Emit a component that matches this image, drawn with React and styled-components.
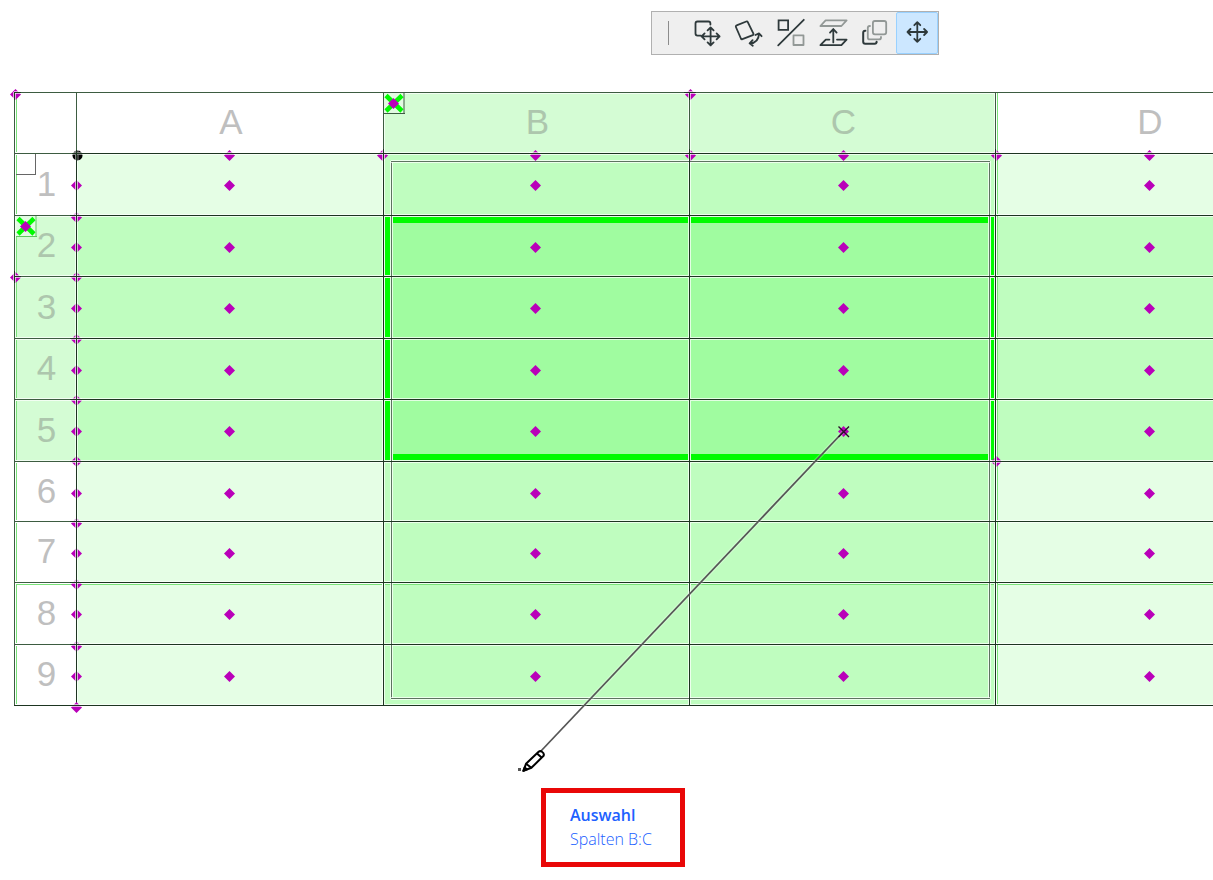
import React from "react";
import styled, { createGlobalStyle } from "styled-components";

const GlobalStyle = createGlobalStyle`
  *, *::before, *::after { box-sizing: border-box; }
  body {
    margin: 0;
    background: #fff;
    font-family: "Liberation Sans", Arial, sans-serif;
    overflow-x: hidden;
  }
`;

const color = {
  line: "#1d3521",
  headLine: "#3d5c41",
  frame: "#5d7360",
  halo: "rgba(255, 255, 255, 0.7)",
  green: "#00fb00",
  softGreen: "#7ae37a",
  handle: "#b900b9",
  ink: "#2e393b",
  muted: "#929896",
};

const Page = styled.main`
  position: relative;
  display: flex;
  flex-direction: column;
  align-items: flex-start;
  min-height: 100vh;
  overflow-x: clip;
`;

const Header = styled.header`
  padding: 11px 0 0 651px;
`;

const Toolbar = styled.div`
  display: flex;
  align-items: center;
  height: 44px;
  border: 1px solid #b0b0b0;
  background: #efefef;
`;

const Separator = styled.span`
  width: 1px;
  height: 24px;
  margin: 0 17px 0 16px;
  background: #8c8c8c;
`;

const ToolButton = styled.button`
  display: block;
  width: 42px;
  height: 42px;
  padding: 0;
  border: 1px solid ${(p) => (p.$active ? "#99d1ff" : "transparent")};
  border-radius: 2px;
  background: ${(p) => (p.$active ? "#cce7ff" : "transparent")};

  svg {
    display: block;
    margin: -1px;
    fill: none;
    stroke: ${color.ink};
    stroke-width: 1.8;
    stroke-linecap: round;
    stroke-linejoin: round;
  }
`;

const Sheet = styled.section`
  padding: 37px 0 0 14px;
`;

const Grid = styled.table`
  width: 1288px;
  table-layout: fixed;
  border-collapse: separate;
  border-spacing: 0;
  border-bottom: 1px solid ${color.line};
`;

const Row = styled.tr`
  height: ${(p) => p.$height}px;
`;

const HeadCell = styled.th`
  padding: 0 0 2px 2px;
  border-top: 1px solid ${color.headLine};
  border-left: 1px solid ${color.headLine};
  background: ${(p) => (p.$selected ? "#d4fcd4" : "#fff")};
  box-shadow: inset 0 0 0 1px ${color.halo};
  color: ${(p) => (p.$selected ? "#adc6ad" : "#bfbfbf")};
  font-size: 35px;
  font-weight: 400;
  line-height: 40px;
  text-align: center;
`;

const tones = { light: "#e5fee5", medium: "#bffdbf", strong: "#a0fca0" };

const Cell = styled.td`
  padding: 0;
  border-top: 1px solid ${color.line};
  border-left: 1px solid ${color.line};
  background: ${(p) => tones[p.$tone]};
  box-shadow: inset 0 0 0 1px ${color.halo};
`;

const Overlay = styled.svg`
  position: absolute;
  inset: 0;
  width: 100%;
  height: 100%;
  pointer-events: none;
`;

const Callout = styled.aside`
  width: 144px;
  margin: 82px 0 13px 541px;
  padding: 10px 0 11px 24px;
  border: 5px solid #e90707;
  color: #2060ff;
  font-family: "Open Sans", "Noto Sans", sans-serif;
  font-size: 16px;
  line-height: 24px;
  white-space: nowrap;
`;

const CalloutTitle = styled.h2`
  margin: 0;
  font-size: 16px;
  font-weight: 600;
`;

const CalloutText = styled.p`
  margin: 0;
  font-weight: 300;
`;

const move = (x, y, r) =>
  `M${x - r} ${y}H${x + r}M${x} ${y - r}V${y + r}` +
  `M${x - r + 3} ${y - 3}L${x - r} ${y}l3 3M${x + r - 3} ${y - 3}l3 3l-3 3` +
  `M${x - 3} ${y - r + 3}l3 -3l3 3M${x - 3} ${y + r - 3}l3 3l3 -3`;

const tools = [
  {
    label: "Verschieben",
    icon: (
      <>
        <path d="M15 23.6H11.5a2 2 0 0 1-2-2V11.5a2 2 0 0 1 2-2H22.4a2 2 0 0 1 2 2V12.5" />
        <path d={move(24.6, 24.4, 9)} />
      </>
    ),
  },
  {
    label: "Drehen",
    icon: (
      <>
        <path d="M8.6 13.4L18.3 9.5a1.2 1.2 0 0 1 1.5 .6L25.4 21.6a1.2 1.2 0 0 1-.6 1.6L14.4 27.1a1.2 1.2 0 0 1-1.5-.6L7.9 15a1.2 1.2 0 0 1 .7-1.6z" />
        <path d="M21.8 31.4C27.8 31 30.8 27 31 21.6M27.4 23L31 21.4L33.6 24.2M24.6 28.2L21.6 31.4L24.8 33.8" />
      </>
    ),
  },
  {
    label: "Spiegeln",
    icon: (
      <>
        <path strokeLinejoin="miter" d="M8.6 8.4h9.5v9.5h-9.5z" />
        <path d="M8.2 33.4L33.8 7.8" />
        <path stroke={color.muted} d="M23.5 23.4h10v9.6h-10z" />
      </>
    ),
  },
  {
    label: "Anheben",
    icon: (
      <>
        <path stroke={color.muted} d="M8.4 14L13.6 8.4H34.6L29.4 14z" />
        <path d="M17.4 27.6H13.8L8.4 33.2H29.4L34.6 27.6H25" />
        <path d="M21.3 30.4V17.2M18 20.6L21.3 17L24.6 20.6" />
      </>
    ),
  },
  {
    label: "Vervielfachen",
    icon: (
      <>
        <rect x="18.9" y="9" width="13.3" height="13.3" rx="2" stroke={color.muted} />
        <path stroke={color.muted} d="M16 14h-.2a2 2 0 0 0-2 2V25.4a2 2 0 0 0 2 2H25a2 2 0 0 0 2-2V25" />
        <path strokeWidth="2" d="M11.4 18.8h-.2a2 2 0 0 0-2 2V29.8a2 2 0 0 0 2 2H20.6a2 2 0 0 0 2-2V30.6" />
      </>
    ),
  },
  { label: "Bewegen", active: true, icon: <path d={move(21.3, 20, 9.8)} /> },
];

const columns = [
  { name: "A", width: 307 },
  { name: "B", width: 306, selected: true },
  { name: "C", width: 306, selected: true },
  { name: "D", width: 307 },
];

const rows = [
  { name: 1, height: 62 },
  { name: 2, height: 61, selected: true },
  { name: 3, height: 62, selected: true },
  { name: 4, height: 61, selected: true },
  { name: 5, height: 62, selected: true },
  { name: 6, height: 60 },
  { name: 7, height: 61 },
  { name: 8, height: 62 },
  { name: 9, height: 61 },
];

const toneOf = (row, col) =>
  row.selected && col.selected ? "strong" : row.selected || col.selected ? "medium" : "light";

const rowLines = [153, 215, 276, 338, 399, 461, 521, 582, 644, 705];
const cellX = [229, 535, 843, 1149];
const cellY = [185, 247, 308, 370, 431, 493, 553, 614, 676];

/*
 * Diamond grip; v and h give the offset of a grid line that runs across it.
 * left and top are where those lines begin, for grips on the sheet's edge.
 */
function Handle({ x, y, v, h, left = -6, top = -6 }) {
  return (
    <g transform={`translate(${x} ${y})`} shapeRendering="crispEdges">
      <path shapeRendering="auto" fill={color.handle} d="M.5 -5L6 .5L.5 6L-5 .5z" />
      {v !== undefined && <rect x={v - 1} y={top} width="3" height={6 - top} fill="#fff" opacity=".65" />}
      {h !== undefined && <rect x={left} y={h - 1} width={6 - left} height="3" fill="#fff" opacity=".65" />}
      {v !== undefined && <rect x={v} y={top} width="1" height={6 - top} fill={color.line} />}
      {h !== undefined && <rect x={left} y={h} width={6 - left} height="1" fill={color.line} />}
    </g>
  );
}

function CheckedMark({ x, y, edge }) {
  return (
    <g transform={`translate(${x} ${y})`}>
      <rect width="20" height="20" fill="#e2fbe2" />
      <path d="M2 2.5L18 18M18 2.5L2 18" stroke={color.green} strokeWidth="4.6" />
      <path d="M20 0V20.5M0 20.5H21" stroke={edge} fill="none" />
      <Handle x={9} y={10} />
    </g>
  );
}

function SelectionFrame() {
  const bands = rowLines.slice(1, 5).map((y, i) => [y + 2, rowLines[i + 2] - 1]);
  const spans = rowLines.slice(0, -1).map((y, i) => [
    i === 0 ? 161 : y + 1,
    i === 8 ? 699 : rowLines[i + 1],
  ]);
  return (
    <g shapeRendering="crispEdges">
      {[[393, 688], [691, 988]].map(([a, b]) => (
        <React.Fragment key={a}>
          <rect x={a} y="217" width={b - a} height="6" fill={color.green} />
          <rect x={a} y="454" width={b - a} height="6" fill={color.green} />
        </React.Fragment>
      ))}
      {bands.map(([a, b]) => (
        <React.Fragment key={a}>
          <rect x="385" y={a} width="5" height={b - a} fill={color.green} />
          <rect x="991" y={a} width="3" height={b - a} fill={color.green} />
        </React.Fragment>
      ))}
      {spans.map(([a, b]) => (
        <React.Fragment key={a}>
          <rect x="390" y={a} width="3" height={b - a} fill={color.halo} />
          <rect x="988" y={a} width="3" height={b - a} fill={color.halo} />
          <rect x="391" y={a} width="1" height={b - a} fill={color.frame} />
          <rect x="989" y={a} width="1" height={b - a} fill={color.frame} />
        </React.Fragment>
      ))}
      {[[391, 689], [690, 990]].map(([a, b]) => (
        <React.Fragment key={a}>
          <rect x={a} y="160" width={b - a} height="3" fill={color.halo} />
          <rect x={a} y="697" width={b - a} height="3" fill={color.halo} />
          <rect x={a} y="161" width={b - a} height="1" fill={color.frame} />
          <rect x={a} y="698" width={b - a} height="1" fill={color.frame} />
        </React.Fragment>
      ))}
    </g>
  );
}

function Guides() {
  const stops = [92, ...rowLines];
  return (
    <g fill={color.softGreen} shapeRendering="crispEdges">
      {stops.slice(0, -1).map((y, i) => (
        <React.Fragment key={y}>
          <rect x="16" y={y + 2} width="1" height={stops[i + 1] - y - 3} />
          <rect x="996" y={y + 1} width="1" height={stops[i + 1] - y - 1} fill="#fff" opacity=".6" />
          <rect x="997" y={y + 1} width="1" height={stops[i + 1] - y - 2} />
        </React.Fragment>
      ))}
      {[[16, 75], [78, 382], [385, 688], [691, 994], [998, 1301]].map(([a, b]) => (
        <rect key={a} x={a} y="584" width={b - a} height="1" />
      ))}
    </g>
  );
}

const edgeHandles = [
  { x: 15, y: 94, v: -1, h: -2, left: -1, top: -2 },
  { x: 690, y: 94, v: -1, h: -2, top: -2 },
  { x: 15, y: 277, v: -1, h: -1, left: -1 },
  { x: 382, y: 155, v: 1, h: -2 },
  { x: 690, y: 155, v: -1, h: -2 },
  { x: 996, y: 155, v: -1, h: -2 },
  { x: 996, y: 461, v: -1, h: 0 },
  { x: 76, y: 217, v: 0, h: -2 },
  { x: 76, y: 277, v: 0, h: -1 },
  { x: 76, y: 339, v: 0, h: -1 },
  { x: 76, y: 400, v: 0, h: -1 },
  { x: 76, y: 461, v: 0, h: 0 },
  { x: 76, y: 523, v: 0, h: -2 },
  { x: 76, y: 584, v: 0, h: -2 },
  { x: 76, y: 646, v: 0, h: -2 },
  { x: 76, y: 707, h: -2 },
];

function Drawing() {
  return (
    <Overlay aria-hidden="true">
      <Guides />
      <SelectionFrame />
      <path d="M35.5 154V174.5M16 174.5H36" stroke="#666" fill="none" />
      <CheckedMark x={384} y={93} edge="#3d5c41" />
      <CheckedMark x={16} y={216} edge="#5cc75c" />
      {cellX.map((x) => <Handle key={x} x={x} y={155} h={-2} />)}
      {cellY.map((y) => (
        <React.Fragment key={y}>
          <Handle x={76} y={y} v={0} />
          {cellX.map((x) => <Handle key={x} x={x} y={y} />)}
        </React.Fragment>
      ))}
      {edgeHandles.map((grip) => <Handle key={`${grip.x}-${grip.y}`} {...grip} />)}
      <circle cx="77.5" cy="155.5" r="5" fill="#000" />
      <path d="M75.5 150V161M78 150V161M72 152.5H83M72 154.5H83" stroke="#fff" opacity=".5" />
      <path d="M76.5 150V161M72 153.5H83" stroke={color.line} />
      <path d="M843.5 431.5L541 751" stroke="#fff" strokeWidth="4" opacity=".25" />
      <path d="M843.5 431.5L541 751" stroke="#565656" strokeWidth="1.8" />
      <path d="M838.5 426.5L849 437M849 426.5L838.5 437" stroke="#2c102c" strokeWidth="1.4" />
      <rect x="518" y="768" width="3" height="3" fill="#555" />
      <g fill="#fff" stroke="#000" strokeWidth="2" strokeLinejoin="round">
        <path d="M523.4 770.8L526 763.8L538.6 751.8Q540.3 750.4 542 751.8Q544.6 753.6 543.6 755.8L531.4 767.8z" />
        <path fill="none" d="M526 763.8L531.4 767.8M537 753.4L541.6 757.6" />
        <path fill="#000" d="M523.4 770.8L524.6 767.6L527 769.4z" />
      </g>
    </Overlay>
  );
}

export default function App() {
  return (
    <Page>
      <GlobalStyle />
      <Header>
        <Toolbar role="toolbar" aria-label="Bearbeiten">
          <Separator />
          {tools.map((tool) => (
            <ToolButton
              key={tool.label}
              type="button"
              aria-label={tool.label}
              aria-pressed={Boolean(tool.active)}
              $active={tool.active}
            >
              <svg width="42" height="42" viewBox="0 0 42 42">{tool.icon}</svg>
            </ToolButton>
          ))}
        </Toolbar>
      </Header>
      <Sheet>
        <Grid>
          <colgroup>
            <col width="62" />
            {columns.map((c) => <col key={c.name} width={c.width} />)}
          </colgroup>
          <thead>
            <Row $height={61}>
              <HeadCell as="td" />
              {columns.map((c) => (
                <HeadCell key={c.name} scope="col" $selected={c.selected}>{c.name}</HeadCell>
              ))}
            </Row>
          </thead>
          <tbody>
            {rows.map((r) => (
              <Row key={r.name} $height={r.height}>
                <HeadCell scope="row" $selected={r.selected}>{r.name}</HeadCell>
                {columns.map((c) => <Cell key={c.name} $tone={toneOf(r, c)} />)}
              </Row>
            ))}
          </tbody>
        </Grid>
      </Sheet>
      <Callout>
        <CalloutTitle>Auswahl</CalloutTitle>
        <CalloutText>Spalten B:C</CalloutText>
      </Callout>
      <Drawing />
    </Page>
  );
}
